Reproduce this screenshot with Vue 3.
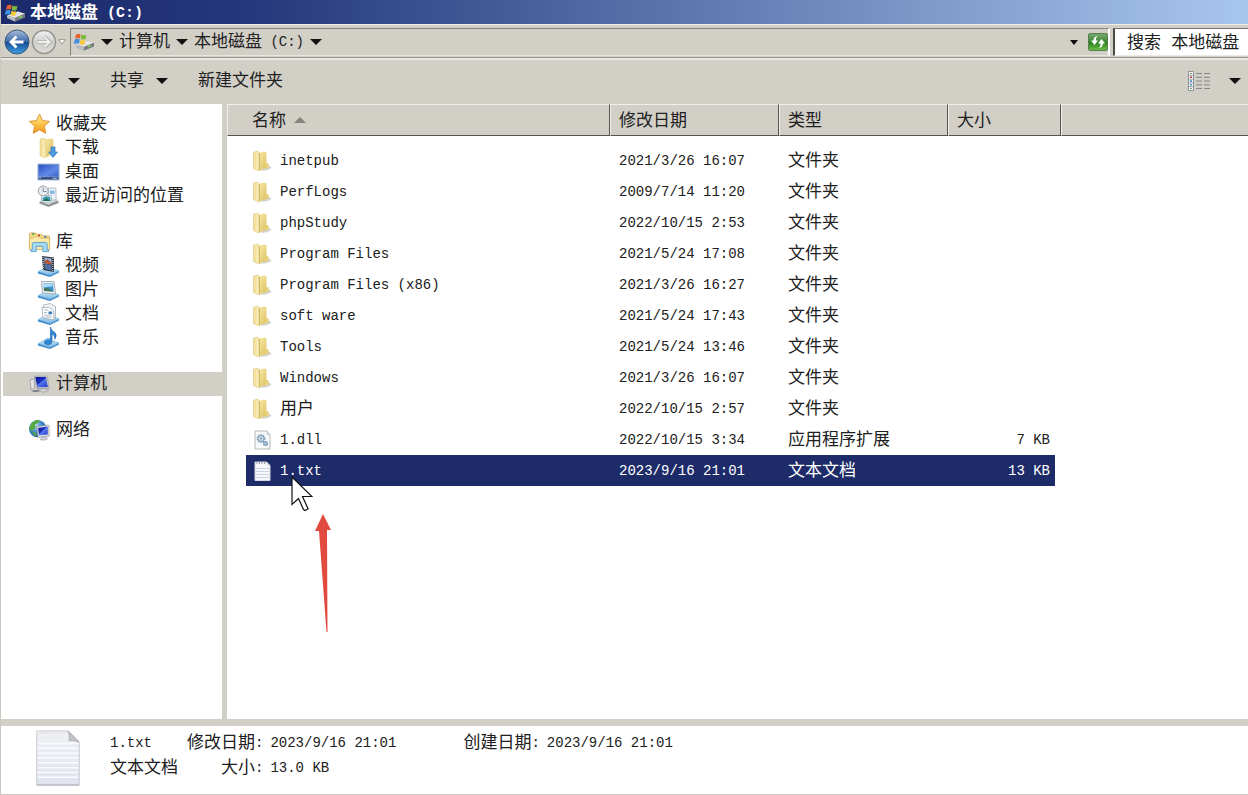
<script setup>
import { h } from 'vue'

// Chinese runs are drawn full width, the remaining characters at half width.
const Txt = (props) =>
  h(
    'span',
    { class: 'txt' },
    props.t
      .split(/([\x20-\x7e]+)/)
      .filter(Boolean)
      .map((s) => h('span', { class: /^[\x20-\x7e]/.test(s) ? 'half' : 'full' }, s))
  )
Txt.props = ['t']

const files = [
  { name: 'inetpub', date: '2021/3/26 16:07', type: '文件夹', size: '', icon: 'folder' },
  { name: 'PerfLogs', date: '2009/7/14 11:20', type: '文件夹', size: '', icon: 'folder' },
  { name: 'phpStudy', date: '2022/10/15 2:53', type: '文件夹', size: '', icon: 'folder' },
  { name: 'Program Files', date: '2021/5/24 17:08', type: '文件夹', size: '', icon: 'folder' },
  { name: 'Program Files (x86)', date: '2021/3/26 16:27', type: '文件夹', size: '', icon: 'folder' },
  { name: 'soft ware', date: '2021/5/24 17:43', type: '文件夹', size: '', icon: 'folder' },
  { name: 'Tools', date: '2021/5/24 13:46', type: '文件夹', size: '', icon: 'folder' },
  { name: 'Windows', date: '2021/3/26 16:07', type: '文件夹', size: '', icon: 'folder' },
  { name: '用户', date: '2022/10/15 2:57', type: '文件夹', size: '', icon: 'folder' },
  { name: '1.dll', date: '2022/10/15 3:34', type: '应用程序扩展', size: '7 KB', icon: 'dll' },
  { name: '1.txt', date: '2023/9/16 21:01', type: '文本文档', size: '13 KB', icon: 'text', selected: true }
]

const groups = [
  {
    title: '收藏夹',
    icon: 'star',
    items: [
      { label: '下载', icon: 'download' },
      { label: '桌面', icon: 'desktop' },
      { label: '最近访问的位置', icon: 'recent' }
    ]
  },
  {
    title: '库',
    icon: 'library',
    items: [
      { label: '视频', icon: 'video' },
      { label: '图片', icon: 'picture' },
      { label: '文档', icon: 'document' },
      { label: '音乐', icon: 'music' }
    ]
  },
  { title: '计算机', icon: 'computer', items: [], selected: true },
  { title: '网络', icon: 'network', items: [] }
]
</script>

<template>
  <div class="window">
    <svg class="defs" width="0" height="0" aria-hidden="true">
      <defs>
        <linearGradient id="gFolder" x1="0" x2="1" y1="0" y2="1">
          <stop offset="0" stop-color="#f9ecae" /><stop offset="1" stop-color="#dcbf5c" />
        </linearGradient>
        <linearGradient id="gFlap" x1="0" x2="1" y1="0" y2="0">
          <stop offset="0" stop-color="#f1dc92" /><stop offset="1" stop-color="#fbf1c4" />
        </linearGradient>
        <linearGradient id="gStar" x1="0" x2="0" y1="0" y2="1">
          <stop offset="0" stop-color="#fff0a0" /><stop offset="0.55" stop-color="#fbc245" /><stop offset="1" stop-color="#ee8f1c" />
        </linearGradient>
        <linearGradient id="gBlue" x1="0" x2="1" y1="0" y2="1">
          <stop offset="0" stop-color="#2c50c4" /><stop offset="0.6" stop-color="#5f8ae6" /><stop offset="1" stop-color="#3c63cf" />
        </linearGradient>
        <linearGradient id="gScreen" x1="0" x2="1" y1="0" y2="1">
          <stop offset="0" stop-color="#0a1494" /><stop offset="0.45" stop-color="#1a2fc0" /><stop offset="0.5" stop-color="#5878ec" /><stop offset="1" stop-color="#2038c8" />
        </linearGradient>
        <linearGradient id="gBase" x1="0" x2="0" y1="0" y2="1">
          <stop offset="0" stop-color="#d8effb" /><stop offset="1" stop-color="#6fb3e2" />
        </linearGradient>
        <linearGradient id="gPaper" x1="0" x2="0" y1="0" y2="1">
          <stop offset="0" stop-color="#f0f1f4" /><stop offset="1" stop-color="#dfe3ee" />
        </linearGradient>
        <linearGradient id="gGreen" x1="0" x2="0" y1="0" y2="1">
          <stop offset="0" stop-color="#7cab75" /><stop offset="0.45" stop-color="#3f8b36" /><stop offset="0.55" stop-color="#2c841f" /><stop offset="1" stop-color="#6fc04a" />
        </linearGradient>
        <linearGradient id="gBack" x1="0" x2="0" y1="0" y2="1">
          <stop offset="0" stop-color="#a9bddb" /><stop offset="0.48" stop-color="#3e6cac" /><stop offset="0.5" stop-color="#14498f" /><stop offset="1" stop-color="#3fa0e4" />
        </linearGradient>
        <linearGradient id="gFwd" x1="0" x2="0" y1="0" y2="1">
          <stop offset="0" stop-color="#f2f2f2" /><stop offset="0.5" stop-color="#cfcfcd" /><stop offset="1" stop-color="#dddcd8" />
        </linearGradient>
        <radialGradient id="gGlobe" cx="0.35" cy="0.3" r="0.8">
          <stop offset="0" stop-color="#c4e4f8" /><stop offset="0.5" stop-color="#3c86cc" /><stop offset="1" stop-color="#164688" />
        </radialGradient>
        <symbol id="i-drive" viewBox="0 0 22 18">
          <path d="M3 12 14 7.500l7 2.500v3.500l-10 4-8-3.500z" fill="#85898d" />
          <path d="m3 11.500 11-4 7 2.300-10 4.200z" fill="#e2e3e4" />
          <path d="m3 11.500 8 2.500v3.500l-8-3.500z" fill="#b9bcc0" />
          <path d="m11 14 10-4.200v3.500l-10 4.200z" fill="#777b80" />
          <path d="m15 13.700 3-1.200" stroke="#7ee04e" stroke-width="1.400" />
          <path d="M3 1.700Q5 0 7.600 1.300L6.900 5.500Q4.500 4.200 2 5.700z" fill="#e8602c" />
          <path d="M8.400 1.600Q10.600 2.800 13.500 2L12.500 6.300Q10 7 7.700 5.900z" fill="#7fb93c" />
          <path d="M1.800 6.500Q4.300 5.200 6.700 6.400L5.900 10.900Q3.500 9.600 .8 11z" fill="#3f8fdc" />
          <path d="M7.500 6.800Q9.800 7.900 12.300 7.200L11.400 11.500Q9 12.300 6.700 11.200z" fill="#f6c83a" />
        </symbol>
        <symbol id="i-folder" viewBox="0 0 20 22">
          <path d="M8 20.500q6 1 11-2.500-1-3-4-2.500z" fill="#a8a8a8" opacity=".5" />
          <path d="M6 2.500 12 1.500q2 0 2 2v14l-7 3z" fill="url(#gFolder)" />
          <path d="M14 13h1.500q1.500 2 .5 4.500l-4 1.500z" fill="#e8d07a" />
          <path d="M1 2.200 5.600 1q1.600 5 1.300 19.600L6 21 1 18.500z" fill="url(#gFlap)" stroke="#d8bd68" stroke-width=".5" />
          <path d="M6.900 3v17.500" stroke="#c4a850" stroke-width=".8" />
        </symbol>
        <symbol id="i-dll" viewBox="0 0 20 22">
          <path d="M2.500 2h12l3 3.500V20h-15z" fill="#f7f8f9" stroke="#b6babd" />
          <path d="M14.500 2v3.500h3" fill="#dfe2e4" stroke="#b6babd" stroke-width=".7" />
          <circle cx="8.500" cy="9.500" r="3.600" fill="#d3e3ef" stroke="#8ba5bb" stroke-width="1.800" stroke-dasharray="1.500 .8" />
          <circle cx="8.500" cy="9.500" r="2.800" fill="none" stroke="#7f9db6" stroke-width=".8" />
          <circle cx="8.500" cy="9.500" r="1" fill="#6b8ba5" />
          <circle cx="13" cy="14.500" r="1.900" fill="#b7d0e4" stroke="#5d88ac" stroke-width="1.500" stroke-dasharray="1.200 .6" />
        </symbol>
        <symbol id="i-text" viewBox="0 0 20 22">
          <path d="M2.500 2H14l3.500 3.500V20.500h-15z" fill="#f6f8fb" stroke="#d2d7de" />
          <path d="M4 3h10" stroke="#777f8c" stroke-width="1.400" stroke-dasharray="1 1.500" />
          <path d="M3 8.500h14M3 11.500h14M3 14.500h14M3 17.500h14" stroke="#c4d0e0" stroke-width=".9" />
          <path d="M14 2v3.500h3.500" fill="#dce1e8" />
        </symbol>
        <symbol id="i-star" viewBox="0 0 22 22">
          <path d="m11 1 3 6.600 7 .8-5.200 4.800 1.500 7.200L11 16.800l-6.300 3.600 1.500-7.200L1 8.400l7-.8z" fill="url(#gStar)" stroke="#dd8c28" stroke-width=".9" stroke-linejoin="round" />
        </symbol>
        <symbol id="i-download" viewBox="0 0 22 22">
          <path d="M5 2.500 14 1.500q2 0 2 2v12l-7 5z" fill="url(#gFolder)" />
          <path d="M2.500 2 7 1q1.500 5 1.300 19.500L7.500 21l-5-2.500z" fill="url(#gFlap)" stroke="#d8bd68" stroke-width=".5" />
          <path d="M13.500 10h4v5H20l-4.500 5.500L11 15h2.500z" fill="#4b9be0" stroke="#2d6fb4" stroke-width=".7" />
        </symbol>
        <symbol id="i-desktop" viewBox="0 0 22 18">
          <path d="M.5 1h21v16H.5z" fill="#8ea4cf" />
          <path d="M1.500 2h19v11.500h-19z" fill="url(#gBlue)" />
          <path d="M1.500 14h19v2h-19z" fill="#32446e" />
          <path d="M2 14.500h2M15 15h4" stroke="#8fd5ee" />
        </symbol>
        <symbol id="i-recent" viewBox="0 0 22 22">
          <path d="m2 17 11-5 8 4v2l-10 4-9-3.500z" fill="#8e9498" />
          <path d="m2 16 11-5 8 4-10 4.500z" fill="#dfe2e4" />
          <path d="M11 3h7.500v12H11z" fill="#eef5fb" stroke="#98a8b8" stroke-width=".7" />
          <path d="M12.500 5.500H17V9h-4.500z" fill="#86b8e0" />
          <path d="M4 10.500h10v6.500H4z" fill="#fff" stroke="#97a8b8" stroke-width=".7" />
          <path d="M5 13q3-3 8-1v4H5z" fill="#3a9ab4" /><path d="m5 16 4-3 4 3z" fill="#2c6f57" />
          <circle cx="5.700" cy="6" r="5" fill="#e7ebee" stroke="#9ba5ae" />
          <path d="M5.700 2.500V6.500H9" fill="none" stroke="#71808e" stroke-width=".9" />
        </symbol>
        <symbol id="i-library" viewBox="0 0 24 22">
          <path d="M1.500 3q0-1.500 1.500-1.500h5L9 3h5l1 1.500h6q1.500 0 1.500 1.500v12h-21z" fill="#f3da87" stroke="#cda954" stroke-width=".8" />
          <path d="M1.500 7h4l1-1.500H12L13.500 7h9v12h-21z" fill="#fae9a8" stroke="#d3b25f" stroke-width=".8" />
          <path d="M4.500 2.700h2" stroke="#3c9c4a" stroke-width="1.800" /><path d="M10.500 4.200h2" stroke="#cc3e38" stroke-width="1.800" /><path d="M17 5.700h2" stroke="#367cc4" stroke-width="1.800" />
          <path d="M4.500 13q0-1.500 1.500-1.500h12.500q1.500 0 1.500 1.500v6h1.500v2h-6v-5.500h-7V21H3v-2h1.500z" fill="#a6d9f3" stroke="#559bcb" stroke-width=".9" />
        </symbol>
        <symbol id="i-base" viewBox="0 0 22 22">
          <path d="m.5 17 9-4.500L21.500 16v1.500L12.500 22 .5 18.500z" fill="#3c88c8" />
          <path d="m.5 16.500 9-4.500 12 4-9 4.500z" fill="url(#gBase)" stroke="#68acd9" stroke-width=".5" />
        </symbol>
        <symbol id="i-video" viewBox="0 0 22 22">
          <use href="#i-base" />
          <path d="m4.500 1 12 1.500V17L5.500 15z" fill="#343840" />
          <path d="m7 2.500 7 .9v6L7 8.500z" fill="#9cbce4" /><path d="m7 9 7 1v5.500L7.500 14z" fill="#5071a8" />
          <path d="m7 6 3-2 4 4v1.500L7 8.300z" fill="#af5538" />
          <path d="m5.500 2 .6 12.500M15.300 3v13" stroke="#d9dde2" stroke-dasharray="1 1" />
        </symbol>
        <symbol id="i-picture" viewBox="0 0 22 22">
          <use href="#i-base" />
          <path d="M4 2.500h12.500L18 15 5 14z" fill="#eef0f2" stroke="#9ca5ad" stroke-width=".9" />
          <path d="M6 4.500h9.500l.6 8L6.500 12z" fill="#3a91d2" /><path d="m6.500 12-.2-3 4 0 6 3.500z" fill="#49745d" /><path d="M6 5h9v2.500q-4 0-9 1z" fill="#afdcf4" />
        </symbol>
        <symbol id="i-document" viewBox="0 0 22 22">
          <use href="#i-base" />
          <path d="m6 2 7-1.500 5 3V15H6z" fill="#f0f4f8" stroke="#9eaab5" stroke-width=".8" />
          <path d="M4.500 4.500H12l4 3.500.5 9-11-2z" fill="#fff" stroke="#9aa8b5" stroke-width=".8" />
          <path d="M6.500 7h4M6.500 9.500h3M7 12h7M7 14h7" stroke="#92a6b8" stroke-width=".8" />
          <path d="M11 8.500h3.500V11H11z" fill="#3a78bd" />
        </symbol>
        <symbol id="i-music" viewBox="0 0 22 22">
          <use href="#i-base" />
          <path d="M13 0q.8 4 4.500 5.500 2.500 3-.2 6.800Q17.500 8 14.500 7v7.500q-.3 3-4 3.300-3.800-.2-3.500-3 .5-3.500 6-3z" fill="#2e86d6" stroke="#1c62aa" stroke-width=".6" />
          <path d="M8 13.500q2-2 4.500-1.500" fill="none" stroke="#8cc8f4" />
        </symbol>
        <symbol id="i-computer" viewBox="0 0 22 20">
          <path d="m2 6 4-1v9l-3 1.500z" fill="#e6e7e9" stroke="#8d9298" stroke-width=".7" />
          <path d="M6 2.500h12L20.500 14l-12 .3z" fill="#c9ccd2" stroke="#90959c" stroke-width=".6" />
          <path d="M7 3.300h10L19 12.800l-10 .2z" fill="url(#gScreen)" />
          <path d="m10 15 6-.4 4 1.500-6 1.900z" fill="#d9dadd" stroke="#888d94" stroke-width=".6" />
          <path d="m3 16.500 6-1 3 1.500-6 1z" fill="#777b83" />
        </symbol>
        <symbol id="i-network" viewBox="0 0 24 24">
          <circle cx="10" cy="10.500" r="9.500" fill="url(#gGlobe)" />
          <path d="M3 5q4-4.500 9-4l-1 3-4 2 1 3-4 4-3-1Q.5 8 3 5zM4 14l4 1 1 4Q5 18 4 14z" fill="#58a844" />
          <path d="M9 8.500 21 6.500q1.500 0 1.500 1.200v11L10.500 20z" fill="#dadde2" stroke="#8e949d" stroke-width=".7" />
          <path d="m10.500 9.800 10.500-1.600v8.600l-9.500 1z" fill="url(#gScreen)" />
          <path d="m14 20 4-.4 3 2q-4 2.500-8 1z" fill="#d0d2d6" stroke="#91959b" stroke-width=".6" />
        </symbol>
      </defs>
    </svg>

    <header class="title">
      <svg class="drive"><use href="#i-drive" /></svg>
      <h1><Txt t="本地磁盘 (C:)" /></h1>
    </header>

    <div class="nav">
      <button class="round" aria-label="后退">
        <svg viewBox="0 0 26 26"><circle cx="13" cy="13" r="12" fill="url(#gBack)" stroke="#3e5678" /><path d="M19.500 13H7.500m5-5.500L7 13l5.500 5.500" fill="none" stroke="#fff" stroke-width="2.800" /></svg>
      </button>
      <button class="round" aria-label="前进">
        <svg viewBox="0 0 26 26"><circle cx="13" cy="13" r="11.500" fill="url(#gFwd)" stroke="#96958f" stroke-width="1.500" /><path d="M6.500 13h12m-5-5.500L19 13l-5.500 5.500" fill="none" stroke="#b3b2ae" stroke-width="3.600" /><path d="M7 13h11.500m-5-5L18.500 13l-5 5" fill="none" stroke="#efefed" stroke-width="2" /></svg>
      </button>
      <button class="history" aria-label="历史记录">
        <svg viewBox="0 0 8 6"><path d="M.8.700h6.400L4 5z" fill="#fff" stroke="#87867f" stroke-width=".8" /></svg>
      </button>
      <div class="address">
        <svg class="drive"><use href="#i-drive" /></svg>
        <button class="arrow" aria-label="展开"><i class="down"></i></button>
        <button><Txt t="计算机" /></button>
        <button class="arrow" aria-label="展开"><i class="down"></i></button>
        <button><Txt t="本地磁盘 (C:)" /></button>
        <button class="arrow" aria-label="展开"><i class="down"></i></button>
        <button class="recent" aria-label="以前的位置"><i class="down small"></i></button>
        <button class="refresh" aria-label="刷新">
          <svg viewBox="0 0 20 18"><rect x=".5" y=".5" width="19" height="17" rx="1.500" fill="url(#gGreen)" stroke="#597f50" /><path d="M9.500 3Q5.500 3.500 5.500 7.500H3L6.500 12 10 7.500H7.700Q7.500 5 9.500 3z" fill="#fff" /><path d="M11 15q4-.7 3.800-4.500H17L13.500 6 10 10.500h2.500Q13 13 11 15z" fill="#fff" /></svg>
        </button>
      </div>
      <input class="search" type="text" aria-label="搜索" placeholder="搜索 本地磁盘" />
    </div>

    <div class="tools">
      <button><Txt t="组织" /><i class="down"></i></button>
      <button><Txt t="共享" /><i class="down"></i></button>
      <button><Txt t="新建文件夹" /></button>
      <button class="view" aria-label="更改视图">
        <svg viewBox="0 0 22 20">
          <path d="M.5.500h5v19h-5z" fill="#f7f7f5" stroke="#8c9299" />
          <path d="M.5 4.300h5M.5 8.100h5M.5 11.900h5M.5 15.700h5" stroke="#9ba0a5" />
          <path d="M2 2.500h2M2 17.500h2" stroke="#7aa05e" /><path d="M2 6.200h2" stroke="#c43c36" stroke-width="1.500" /><path d="M2 10h2" stroke="#3c7acc" stroke-width="1.500" /><path d="M2 13.800h2" stroke="#3c9cac" stroke-width="1.500" />
          <path d="M8 2.500h6M16 2.500h6M8 6.300h6M16 6.300h6M8 10h6M16 10h6M8 13.800h6M16 13.800h6M8 17.500h6M16 17.500h6" stroke="#85878a" />
        </svg>
      </button>
      <button class="more" aria-label="更多选项"><i class="down"></i></button>
    </div>

    <main class="body">
      <nav class="tree">
        <ul v-for="g in groups" :key="g.title">
          <li :class="{ selected: g.selected }">
            <a href="#" class="top"><svg><use :href="'#i-' + g.icon" /></svg><Txt :t="g.title" /></a>
          </li>
          <li v-for="i in g.items" :key="i.label">
            <a href="#"><svg><use :href="'#i-' + i.icon" /></svg><Txt :t="i.label" /></a>
          </li>
        </ul>
      </nav>

      <section class="list">
        <table>
          <colgroup><col class="c-name" /><col class="c-date" /><col class="c-date" /><col class="c-size" /><col /></colgroup>
          <thead>
            <tr>
              <th class="first"><Txt t="名称" /><i class="up"></i></th>
              <th><Txt t="修改日期" /></th>
              <th><Txt t="类型" /></th>
              <th><Txt t="大小" /></th>
              <th class="rest"></th>
            </tr>
          </thead>
          <tbody>
            <tr v-for="f in files" :key="f.name" :class="{ selected: f.selected }">
              <td><div class="cell name"><svg><use :href="'#i-' + f.icon" /></svg><Txt :t="f.name" /></div></td>
              <td><div class="cell"><Txt :t="f.date" /></div></td>
              <td><div class="cell"><Txt :t="f.type" /></div></td>
              <td><div class="cell size"><Txt :t="f.size" /></div></td>
              <td></td>
            </tr>
          </tbody>
        </table>
      </section>
    </main>

    <footer class="details">
      <svg class="preview" viewBox="0 0 46 58">
        <path d="M1 1h32q1 0 3 2l8 8q1 1 1 3V57H1z" fill="url(#gPaper)" stroke="#c6c8ce" />
        <path d="M4 3h28" stroke="#d0d2d6" stroke-dasharray="1.500 2" />
        <path d="M2 14h42M2 19h42M2 24h42M2 29h42M2 34h42M2 39h42M2 44h42M2 49h42" stroke="#fafbff" stroke-width="1.500" />
        <path d="M33.500 1.500q2 4 1 9.500 5-1 10 1.500z" fill="#c3c5c8" stroke="#a9abae" />
        <path d="M1 57h44" stroke="#abadb3" />
      </svg>
      <div class="file"><Txt t="1.txt" /><Txt t="文本文档" /></div>
      <dl>
        <dt><Txt t="修改日期:" /></dt><dd><Txt t="2023/9/16 21:01" /></dd>
        <dt><Txt t="大小:" /></dt><dd><Txt t="13.0 KB" /></dd>
      </dl>
      <dl>
        <dt><Txt t="创建日期:" /></dt><dd><Txt t="2023/9/16 21:01" /></dd>
      </dl>
    </footer>

    <svg class="cursor" viewBox="0 0 22 36" aria-hidden="true">
      <path d="M1 1v27.500l6.500-6 5 11 1.500 1 3-1.500-.5-1.500-5-11H21z" fill="#fff" stroke="#111" stroke-width="1.200" />
    </svg>
    <svg class="pointer" viewBox="0 0 16 118" aria-hidden="true">
      <path d="M8 0l8 16h-4L12.500 118h-1L4 17H0z" fill="#e04a3f" />
    </svg>
  </div>
</template>

<style>
body {
  margin: 0;
}
.txt {
  white-space: pre;
}
.txt > span {
  line-height: 1;
}
.txt .full {
  font-family: "Noto Sans CJK SC", sans-serif;
  font-size: 17px;
  vertical-align: -1px;
}
.txt .half {
  font-family: "Liberation Mono", monospace;
  font-size: 14px;
}
h1 .txt .half {
  font-size: 15px;
}
</style>

<style scoped>
.window {
  position: relative;
  display: flex;
  flex-direction: column;
  box-sizing: border-box;
  min-height: 100vh;
  border-left: 1px solid #cbc8c0;
  border-bottom: 1px solid #cbc8c0;
  background: #d2cfc7;
  color: #202020;
  font-family: "Liberation Mono", "Noto Sans CJK SC", monospace;
  font-size: 17px;
  line-height: 24px;
}
.defs {
  position: absolute;
}
button {
  display: flex;
  align-items: center;
  padding: 0;
  border: 0;
  background: none;
  color: inherit;
  font: inherit;
}
.title {
  display: flex;
  align-items: center;
  gap: 4px;
  box-sizing: border-box;
  height: 24px;
  padding: 2px 0 0 3px;
  background: linear-gradient(90deg, #1c2a6c, #24387b 20%, #a9c6ef);
  color: #fff;
}
.title h1 {
  margin: 0;
  font-size: 17px;
  line-height: 24px;
}
.drive {
  flex: none;
  width: 22px;
  height: 18px;
}
.nav {
  display: flex;
  align-items: center;
  height: 28px;
  padding: 3px 0 1px 3px;
  border-top: 1px solid #efede8;
  border-bottom: 1px solid #98968f;
}
.round {
  width: 27px;
  height: 26px;
}
.round svg {
  width: 26px;
  height: 26px;
}
.history {
  width: 12px;
}
.history svg {
  width: 8px;
  height: 6px;
}
.address {
  display: flex;
  flex: 1;
  align-items: center;
  box-sizing: border-box;
  height: 28px;
  padding-left: 2px;
  border: 1px solid #85837c;
  border-right: 2px solid #fff;
  border-bottom-color: #e8e6e0;
}
.down {
  border: 6px solid transparent;
  border-top-color: #111;
  border-bottom-width: 0;
}
.down.small {
  border-width: 5px 4px 0;
}
.arrow {
  width: 24px;
  justify-content: center;
}
.recent {
  margin-left: auto;
}
.refresh {
  margin-left: 10px;
}
.refresh svg {
  width: 20px;
  height: 18px;
}
.search {
  flex: none;
  box-sizing: border-box;
  width: 135px;
  height: 28px;
  margin-left: 3px;
  padding: 2px 0 0 12px;
  border: 1px solid #77756f;
  border-left: 2px solid #4c4b48;
  border-right: 0;
  border-bottom-color: #eceae5;
  border-radius: 0;
  background: #fff;
  font: inherit;
}
.search::placeholder {
  color: #202020;
  opacity: 1;
}
.tools {
  display: flex;
  align-items: center;
  gap: 30px;
  height: 42px;
  padding: 0 7px 2px 21px;
  border-top: 2px solid #e9e7e2;
}
.tools button {
  gap: 12px;
}
.tools .view {
  margin-left: auto;
}
.tools .more {
  margin-left: -11px;
}
.view svg {
  width: 22px;
  height: 20px;
}
.body {
  display: flex;
  flex: 1;
  gap: 5px;
}
.tree {
  display: flex;
  flex: none;
  flex-direction: column;
  gap: 22px;
  box-sizing: border-box;
  width: 221px;
  padding: 8px 0 0 2px;
  background: #fff;
}
.tree ul {
  margin: 0;
  padding: 0;
  list-style: none;
}
.tree .selected {
  background: #d2cfc7;
}
.tree a {
  display: flex;
  align-items: center;
  gap: 5px;
  height: 24px;
  padding-left: 34px;
  color: inherit;
  text-decoration: none;
}
.tree a.top {
  padding-left: 25px;
}
.tree svg {
  width: 23px;
  height: 22px;
}
.list {
  flex: 1;
  min-width: 0;
  background: #fff;
}
table {
  width: 100%;
  table-layout: fixed;
  border-spacing: 0;
}
.c-name {
  width: 383px;
}
.c-date {
  width: 169px;
}
.c-size {
  width: 113px;
}
th {
  box-sizing: border-box;
  height: 32px;
  padding: 1px 0 0 8px;
  border: 1px solid #f1efeb;
  border-right-color: #55534f;
  border-bottom-color: #55534f;
  background: #d2cfc7;
  font-weight: normal;
  text-align: left;
}
th.first {
  padding-left: 24px;
}
th.rest {
  border-right: 0;
}
.up {
  display: inline-block;
  margin-left: 8px;
  border: 6px solid transparent;
  border-top-width: 0;
  border-bottom-color: #85837d;
  vertical-align: 2px;
}
tbody::before {
  content: "";
  display: block;
  height: 9px;
}
td {
  padding: 0;
}
.cell {
  display: flex;
  align-items: center;
  height: 31px;
  padding-left: 9px;
}
.cell.name {
  gap: 7px;
  margin-left: 19px;
  padding-left: 6px;
}
.cell.size {
  justify-content: flex-end;
  margin-right: 6px;
  padding-right: 5px;
}
.cell svg {
  width: 21px;
  height: 22px;
}
.selected .cell {
  background: #1e2b69;
  color: #fff;
}
.details {
  display: flex;
  align-items: flex-start;
  height: 64px;
  padding: 4px 0 0 34px;
  border-top: 7px solid #d2cfc7;
  background: #fff;
  line-height: 25px;
}
.preview {
  flex: none;
  width: 46px;
  height: 56px;
}
.file {
  display: flex;
  flex-direction: column;
  width: 68px;
  margin: 0 9px 0 29px;
}
dl {
  display: grid;
  grid-template-columns: max-content max-content;
  column-gap: 7px;
  margin: 0 67px 0 0;
}
dt {
  text-align: right;
}
dd {
  margin: 0;
}
.cursor {
  position: absolute;
  top: 476px;
  left: 290px;
  width: 22px;
  height: 36px;
}
.pointer {
  position: absolute;
  top: 514px;
  left: 314px;
  width: 16px;
  height: 118px;
}
</style>
